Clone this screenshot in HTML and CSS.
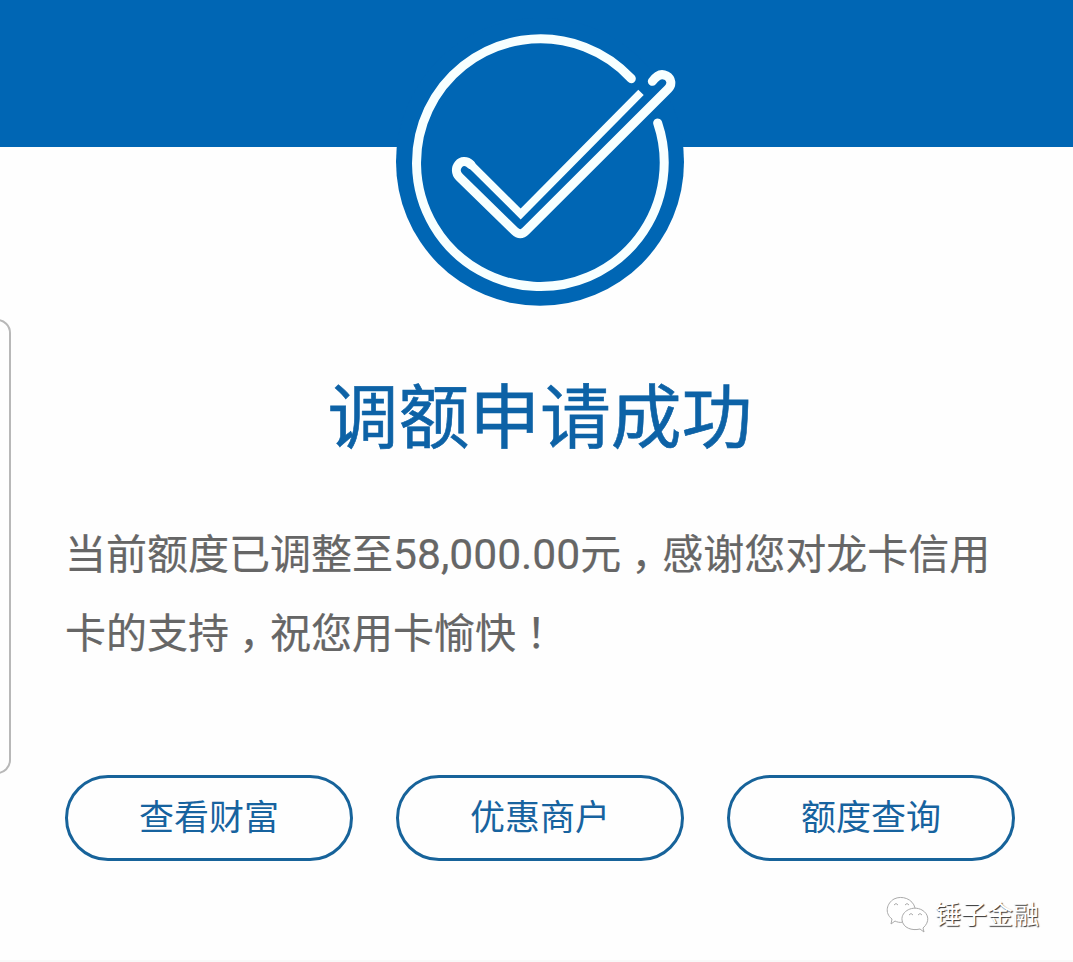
FILE: index.html
```
<!DOCTYPE html>
<html lang="zh-CN">
<head>
    <meta charset="UTF-8">
    <meta name="viewport" content="width=device-width, initial-scale=1.0">
    <title>调额申请成功</title>
    <link rel="stylesheet" href="styles.css">
</head>
<body>
    <header class="banner">
        <svg class="badge" viewBox="18 -6 864 864">
            <circle class="badge-bg" cx="450" cy="425.500" r="432"/>
            <g class="badge-lines">
                <path d="M724 176A371.500 371.500 0 1 0 803 309"/>
                <path d="M787 184C800 166 814 159 829 167C845 176 847 194 834 207L407 633Q391 649 374 633L208 471C184 447 214 406 243 434"/>
                <path class="inner" d="M239 430L392 582L753 217"/>
            </g>
        </svg>
    </header>

    <main class="content">
        <h1>调额申请成功</h1>
        <p class="message">当前额度已调整至<span class="amount">58,000.00</span>元<span class="punct">，</span>感谢您对龙卡信用卡的支持<span class="punct">，</span>祝您用卡愉快<span class="punct">！</span></p>
        <nav class="actions">
            <a class="btn">查看财富</a>
            <a class="btn">优惠商户</a>
            <a class="btn">额度查询</a>
        </nav>
    </main>

    <div class="side-handle"></div>

    <footer class="account">
        <svg class="wechat" viewBox="0 0 44 38">
            <path d="M17 26C14 27 11 26 9 25L5 28L6 23C-2 17 1 7 8 3C16-1 27 3 29 12"/>
            <path d="M37 32C44 26 43 18 36 14C27 9 15 15 16 24C17 32 26 35 34 33L38 36Z"/>
            <path d="M8 9Q10 6 12 9M19 9Q21 6 23 9M23 19Q25 16 27 19M32 19Q34 16 36 19"/>
        </svg>
        <span>锤子金融</span>
    </footer>
</body>
</html>
```

FILE: styles.css
```
* {
    box-sizing: border-box;
}
body {
    position: relative;
    height: 962px;
    margin: 0;
    overflow: hidden;
    background-color: #fefefe;
    border-bottom: 2px solid #f8f8f8;
    font-family: Roboto, "Noto Sans CJK SC", sans-serif;
}
.banner {
    display: flex;
    justify-content: center;
    height: 147px;
    padding: 18px 0 0 7px;
    background-color: #0066b4;
}
.badge {
    flex: none;
    width: 288px;
    height: 288px;
}
.badge-bg {
    fill: #0066b4;
}
.badge-lines {
    fill: none;
    stroke: #f7ffff;
    stroke-width: 27;
    stroke-linecap: round;
}
.badge-lines .inner {
    stroke-width: 23;
    stroke-linecap: butt;
}
.content {
    padding: 220px 58px 0 65px;
}
h1 {
    margin: 0;
    font-size: 70.8px;
    font-weight: 400;
    line-height: 104px;
    text-align: center;
    color: #0d62a6;
    -webkit-text-stroke: 0.6px #0d62a6;
}
.message {
    margin: 44px 0 0;
    font-size: 41px;
    line-height: 79px;
    color: #666;
    -webkit-text-stroke: 0.2px #666;
}
.amount {
    font-size: 42.6px;
}
/* 标点居中显示 */
.punct {
    display: inline-block;
    width: 41px;
    padding-left: 10px;
    line-height: 1;
}
.actions {
    display: flex;
    gap: 43px;
    margin-top: 101px;
}
.btn {
    flex: 1;
    height: 86px;
    border: 3px solid #17639a;
    border-radius: 43px;
    font-size: 35px;
    line-height: 82px;
    text-align: center;
    color: #17639f;
}
/* 左侧边缘把手 */
.side-handle {
    position: absolute;
    top: 319px;
    left: -20px;
    width: 31px;
    height: 455px;
    border: 2px solid #b8b8b8;
    border-radius: 14px;
}
.account {
    position: absolute;
    right: 34px;
    bottom: 25px;
    display: flex;
    align-items: center;
    gap: 5px;
    font-size: 26px;
    line-height: 40px;
    color: #fff;
    text-shadow: 1px 1px 1px #333;
}
.wechat {
    width: 44px;
    height: 38px;
    fill: #fff;
    stroke: #aaa;
    stroke-width: 1;
}
```
